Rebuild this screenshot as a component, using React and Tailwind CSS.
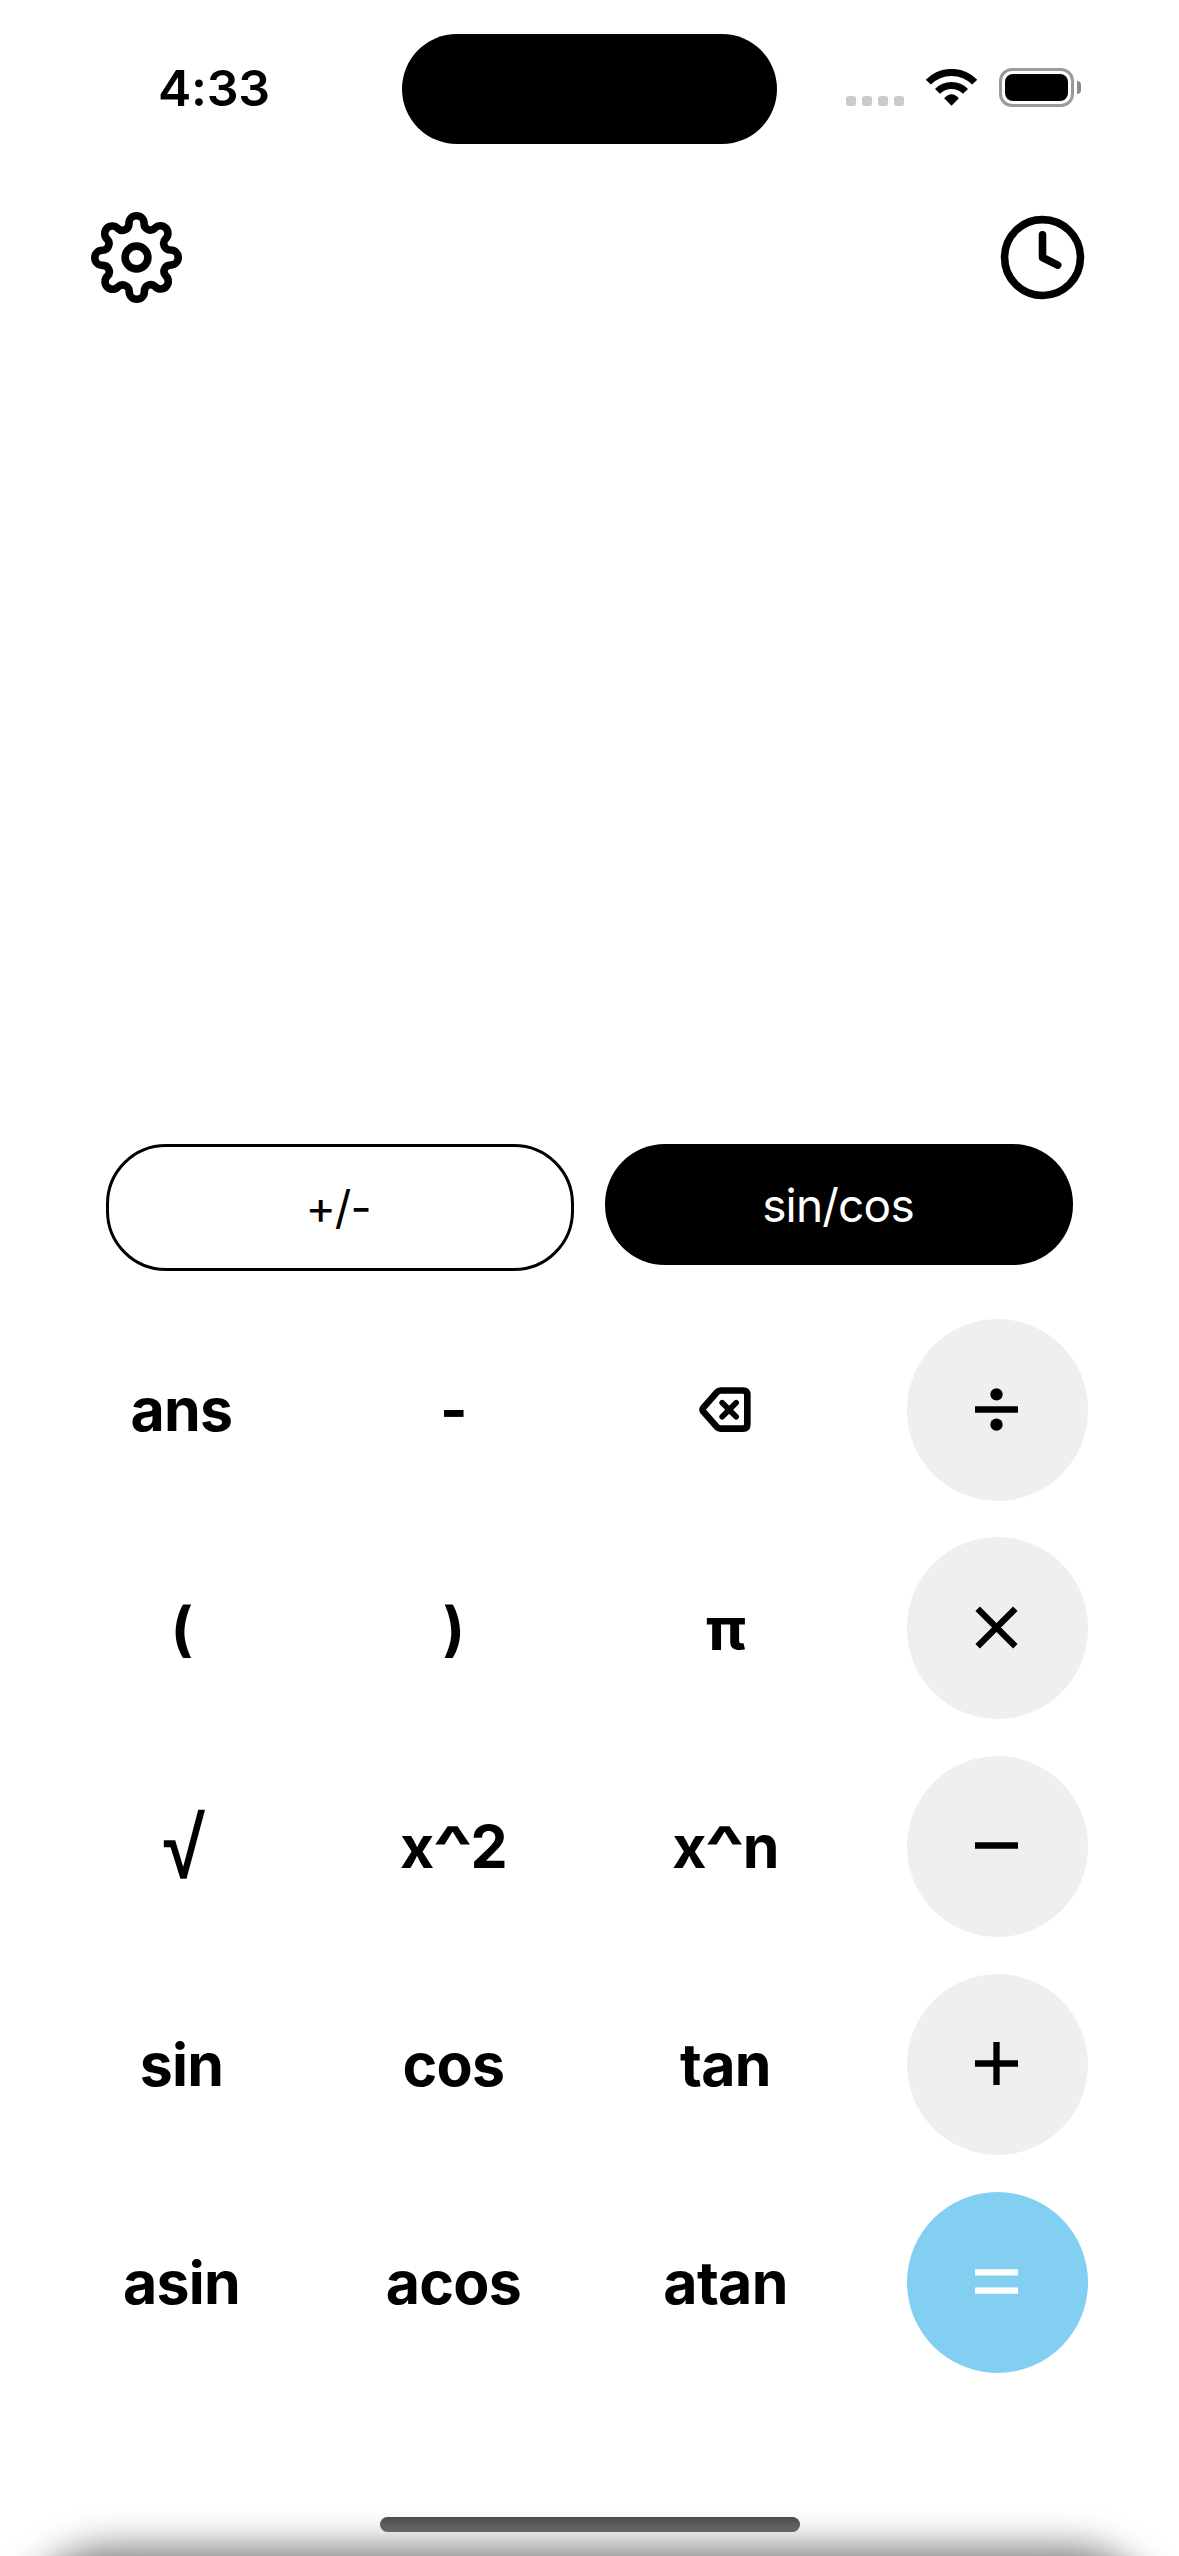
import React from "react";
import { FiSettings, FiClock } from "react-icons/fi";

function WifiIcon() {
  return (
    <svg className="h-[37px] w-[51px]" viewBox="0 0 153 111" fill="none" stroke="#000">
      <path d="M7 39.500A97 97 0 0 1 146 39.500" strokeWidth="21" />
      <path d="M34.500 67A59 59 0 0 1 118.500 67" strokeWidth="21" />
      <path d="M54.500 87.500Q76.500 64.500 98.500 87.500L76.500 110.500Z" fill="#000" stroke="none" />
    </svg>
  );
}

function Battery() {
  return (
    <div className="flex items-center gap-[3px]">
      <div className="h-[39px] w-[75px] rounded-[13px] border-[3px] border-[#9a9a9a] p-[3px]">
        <div className="h-full w-full rounded-[8px] bg-black" />
      </div>
      <div className="h-[13px] w-1 rounded-r-full bg-[#8c8c8c]" />
    </div>
  );
}

function BackspaceIcon() {
  return (
    <svg
      className="mr-0.5 h-[45.300px] w-[52px]"
      viewBox="0 0 156 136"
      fill="none"
      stroke="#000"
      strokeLinecap="round"
      strokeLinejoin="round"
    >
      <path
        d="M65 10.500H132Q145 10.500 145 23.500V112Q145 125 132 125H65Q58.500 125 54 120.500L13 74Q8.500 68 13 62L54 15.500Q58.500 10.500 65 10.500Z"
        strokeWidth="20"
      />
      <path d="M69.500 47.500L111.500 89.500M111.500 47.500L69.500 89.500" strokeWidth="17" />
    </svg>
  );
}

const glyphs = {
  divide: (
    <>
      <path d="M0 64.500H129" />
      <circle cx="64.500" cy="19" r="18.500" fill="currentColor" stroke="none" />
      <circle cx="64.500" cy="110" r="18.500" fill="currentColor" stroke="none" />
    </>
  ),
  multiply: <path d="M8 8L121 121M121 8L8 121" />,
  minus: <path d="M0 64.500H129" />,
  plus: <path d="M0 64.500H129M64.500 0V129" />,
  equals: <path d="M0 37H129M0 92H129" />,
};

function Operator({ name }) {
  const tone = name === "equals" ? "bg-[#82cff2] text-white" : "bg-[#efefed] text-black";
  return (
    <button className={`flex h-[181.300px] w-[181px] items-center justify-center rounded-full pr-[1.600px] pb-[1.600px] ${tone}`}>
      <svg className="h-[43px] w-[43px]" viewBox="0 0 129 129" fill="none" stroke="currentColor" strokeWidth="19">
        {glyphs[name]}
      </svg>
    </button>
  );
}

function Power({ exponent }) {
  return (
    <span>
      x<span className="mx-[4.400px] inline-block scale-x-[1.400]">^</span>
      {exponent}
    </span>
  );
}

const rows = [
  ["ans", "-", <BackspaceIcon />, "divide"],
  ["(", ")", <span className="inline-block scale-x-[1.070]">π</span>, "multiply"],
  [
    <span className="inline-block scale-x-[0.870] pt-1 pl-1.5 font-['Liberation_Sans'] text-[86px] leading-none">√</span>,
    <Power exponent="2" />,
    <Power exponent="n" />,
    "minus",
  ],
  ["sin", "cos", "tan", "plus"],
  ["asin", "acos", "atan", "equals"],
];

export default function App() {
  return (
    <div className="relative flex h-[2556px] w-[1179px] flex-col overflow-hidden bg-white font-['Inter',sans-serif] text-black">
      <div className="flex h-[212px] items-start">
        <div className="w-[402px] pt-[63px] pl-[158px] text-[50px] leading-none font-semibold tracking-[-0.300px]">4:33</div>
        <div className="mt-[34px] h-[110px] w-[375.300px] rounded-full bg-black" />
        <div className="mt-[68px] ml-[68.700px] flex h-[39px] items-center">
          <div className="mr-[22px] flex gap-1.5 self-end pb-[1px]">
            {[0, 1, 2, 3].map((i) => (
              <div key={i} className="h-2.5 w-2.5 rounded-[3px] bg-[#cbcbcb]" />
            ))}
          </div>
          <WifiIcon />
          <div className="ml-[22px]">
            <Battery />
          </div>
        </div>
      </div>

      <div className="flex justify-between pr-[91.500px] pl-[90.700px]">
        <FiSettings size={91} />
        <FiClock size={91} />
      </div>

      <div className="flex-1" />

      <div className="flex h-[175.300px] items-start gap-[31px] pl-[106px] text-[46px] leading-none">
        <button className="flex h-[127px] w-[468px] items-center justify-center rounded-[60px] border-[3px] border-black pr-1 pb-0.5 tracking-[-1px]">
          +/-
        </button>
        <button className="flex h-[121px] w-[468px] items-center justify-center rounded-[60px] bg-black pr-0.5 tracking-[-0.800px] text-white">
          sin/cos
        </button>
      </div>

      <div className="mb-[183px] flex flex-col gap-[36.800px] pl-[91px] text-[59px] leading-none font-bold tracking-[-0.700px]">
        {rows.map(([a, b, c, op], i) => (
          <div key={i} className="grid h-[181.300px] grid-cols-[repeat(4,181px)] items-center justify-items-center gap-x-[91px]">
            <div>{a}</div>
            <div>{b}</div>
            <div>{c}</div>
            <Operator name={op} />
          </div>
        ))}
      </div>

      <div className="absolute top-[2517px] left-[380px] h-[15px] w-[420px] rounded-full bg-linear-to-b from-[#4e4e4e] to-[#727272]" />
      <div className="absolute top-[2547px] left-3 h-72 w-[1155px] rounded-[100px] bg-black/50 blur-[18.500px]" />
    </div>
  );
}
